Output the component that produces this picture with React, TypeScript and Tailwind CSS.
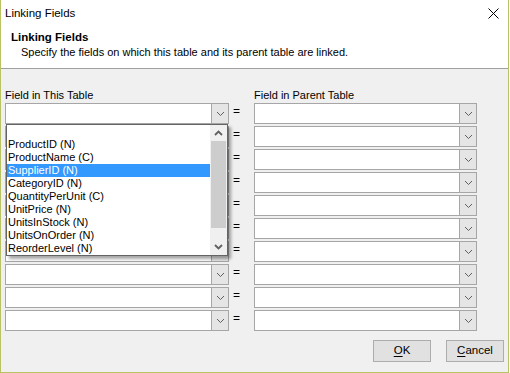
import React from "react";

const items = [
  "",
  "ProductID (N)",
  "ProductName (C)",
  "SupplierID (N)",
  "CategoryID (N)",
  "QuantityPerUnit (C)",
  "UnitPrice (N)",
  "UnitsInStock (N)",
  "UnitsOnOrder (N)",
  "ReorderLevel (N)",
];

function Chevron({ up = false, bold = false }: { up?: boolean; bold?: boolean }) {
  return (
    <svg width="9" height="6" viewBox="0 0 9 6" className="block">
      <path
        d={up ? "M1 5 L4.5 1.5 L8 5" : "M1 1 L4.5 4.5 L8 1"}
        fill="none"
        stroke={bold ? "#606060" : "#5f5f5f"}
        strokeWidth={bold ? 1.8 : 1}
      />
    </svg>
  );
}

function Combo() {
  return (
    <div className="flex h-[21px] border border-[#a6a6a6] bg-white">
      <div className="flex-1" />
      <div className="flex w-[17px] items-center justify-center border-l border-[#a6a6a6] bg-[#e5e5e5]">
        <Chevron />
      </div>
    </div>
  );
}

function Button({ label, rest }: { label: string; rest: string }) {
  return (
    <button className="flex h-[22px] w-[58px] items-center justify-center border border-[#adadad] bg-[#e1e1e1] text-[11.5px] text-black">
      <span className="underline underline-offset-2">{label}</span>
      {rest}
    </button>
  );
}

export default function App() {
  const rows = Array.from({ length: 10 });

  return (
    <div className="relative flex h-[373px] w-[510px] flex-col bg-white pr-[1px]">
      <div className="flex flex-1 flex-col border-x border-b border-[#b9c364] bg-[#f0f0f0] font-['Liberation_Sans',Arial,sans-serif] text-[11px] text-black">
        {/* header */}
        <div className="h-[69px] border-b border-[#a0a0a0] bg-white">
          <div className="flex h-[27px] items-center justify-between pl-[4px] pr-[9px] text-[11.5px]">
            <span>Linking Fields</span>
            <svg width="11" height="11" viewBox="0 0 11 11">
              <path d="M0.5 0.5 L10.5 10.5 M10.5 0.5 L0.5 10.5" stroke="#000" strokeWidth="1" />
            </svg>
          </div>
          <div className="pl-[10px] pt-[3px] text-[11.5px] font-bold leading-[15px]">Linking Fields</div>
          <div className="pl-[20px] leading-[15px]">
            Specify the fields on which this table and its parent table are linked.
          </div>
        </div>

        {/* body */}
        <div className="flex-1 pl-[4px] pt-[19px]">
          <div className="grid grid-cols-[224px_25px_223px] leading-[14px]">
            <div className="mb-[1px]">Field in This Table</div>
            <div />
            <div className="mb-[1px]">Field in Parent Table</div>
          </div>
          <div className="grid grid-cols-[224px_25px_223px] gap-y-[2px]">
            {rows.map((_, i) => (
              <React.Fragment key={i}>
                <Combo />
                <div className="pl-[4px] pt-[1px] text-[12px] leading-[14px]">=</div>
                <Combo />
              </React.Fragment>
            ))}
          </div>
        </div>

        {/* footer */}
        <div className="flex justify-end gap-[15px] pb-[10px] pr-[4px]">
          <Button label="O" rest="K" />
          <Button label="C" rest="ancel" />
        </div>

        {/* open dropdown list */}
        <div className="absolute left-[6px] top-[124px] flex h-[132px] w-[222px] border border-[#646464] bg-white shadow-[3px_3px_3px_rgba(0,0,0,0.35)]">
          <div className="flex-1">
            {items.map((it, i) => (
              <div
                key={i}
                className={`h-[13px] pl-[1px] leading-[13px] ${
                  i === 3 ? "bg-[#3399ff] text-white" : "text-black"
                }`}
              >
                {it}
              </div>
            ))}
          </div>
          <div className="flex w-[17px] flex-col bg-[#f0f0f0]">
            <div className="flex h-[16px] items-center justify-center">
              <Chevron up bold />
            </div>
            <div className="mx-[1px] h-[87px] bg-[#cdcdcd]" />
            <div className="flex-1" />
            <div className="flex h-[17px] items-center justify-center">
              <Chevron bold />
            </div>
          </div>
        </div>
      </div>
    </div>
  );
}
